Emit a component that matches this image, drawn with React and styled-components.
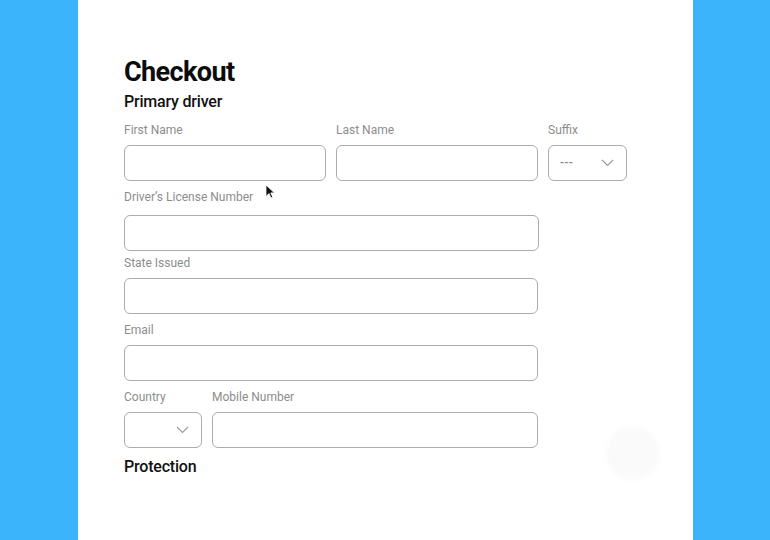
import styled, { createGlobalStyle } from "styled-components";

const GlobalStyle = createGlobalStyle`
  html, body {
    margin: 0;
    padding: 0;
    background: #3bb4fb;
  }
  body {
    font-family: Roboto, "Liberation Sans", sans-serif;
  }
`;

const Page = styled.div`
  display: flex;
  width: 770px;
  height: 540px;
  padding-left: 78px;
  box-sizing: border-box;
  overflow: hidden;
  background: #3bb4fb;
`;

const Panel = styled.main`
  position: relative;
  width: 615px;
  background: #ffffff;
  padding: 56px 0 0 46px;
  box-sizing: border-box;
`;

const Title = styled.h1`
  margin: 0 0 4px;
  font-size: 27px;
  line-height: 32px;
  font-weight: 700;
  letter-spacing: -0.6px;
  color: #0c0c0c;
`;

const Section = styled.h2`
  margin: ${(p) => p.$mt || 0}px 0 11px;
  font-size: 16px;
  line-height: 20px;
  font-weight: 500;
  letter-spacing: -0.2px;
  color: #111;
`;

const Form = styled.div`
  display: flex;
  flex-direction: column;
`;

const Row = styled.div`
  display: flex;
  gap: 10px;
  margin-top: ${(p) => p.$mt || 0}px;
`;

const Field = styled.label`
  display: flex;
  flex-direction: column;
  width: ${(p) => p.$w}px;
  margin-top: ${(p) => p.$mt || 0}px;
`;

const Label = styled.span`
  font-size: 12px;
  line-height: 14px;
  color: #8d8d8d;
  margin-bottom: ${(p) => p.$gap || 8}px;
  white-space: nowrap;
`;

const Input = styled.div`
  height: 36px;
  box-sizing: border-box;
  border: 1.5px solid #acacac;
  border-radius: 6px;
  background: #fff;
`;

const Select = styled(Input)`
  display: flex;
  align-items: center;
  justify-content: space-between;
  padding: 0 12px 0 11px;
`;

const Placeholder = styled.span`
  font-size: 12px;
  font-weight: 500;
  color: #8a8a8a;
  letter-spacing: 0.3px;
`;

const Fab = styled.div`
  position: absolute;
  left: 528px;
  top: 426px;
  width: 54px;
  height: 54px;
  border-radius: 50%;
  background: #fafafa;
  filter: blur(2px);
`;

const Cursor = styled.svg`
  position: absolute;
  left: 187px;
  top: 184px;
`;

const Chevron = () => (
  <svg width="13" height="8" viewBox="0 0 13 8" fill="none">
    <path d="M1 1l5.5 5.5L12 1" stroke="#9a9a9a" strokeWidth="1.1" />
  </svg>
);

export default function App() {
  return (
    <>
      <GlobalStyle />
      <Page>
        <Panel>
          <Title>Checkout</Title>
          <Section>Primary driver</Section>
          <Form>
            <Row>
              <Field $w={202}>
                <Label>First Name</Label>
                <Input />
              </Field>
              <Field $w={202}>
                <Label>Last Name</Label>
                <Input />
              </Field>
              <Field $w={79}>
                <Label>Suffix</Label>
                <Select>
                  <Placeholder>---</Placeholder>
                  <Chevron />
                </Select>
              </Field>
            </Row>
            <Field $w={415} $mt={9}>
              <Label $gap={11}>Driver’s License Number</Label>
              <Input />
            </Field>
            <Field $w={414} $mt={5}>
              <Label>State Issued</Label>
              <Input />
            </Field>
            <Field $w={414} $mt={9}>
              <Label>Email</Label>
              <Input />
            </Field>
            <Row $mt={9}>
              <Field $w={78}>
                <Label>Country</Label>
                <Select>
                  <span />
                  <Chevron />
                </Select>
              </Field>
              <Field $w={326}>
                <Label>Mobile Number</Label>
                <Input />
              </Field>
            </Row>
          </Form>
          <Section $mt={9}>Protection</Section>
          <Fab />
          <Cursor width="10" height="15" viewBox="0 0 10 15">
            <path d="M1 1v11.5l3-3 2 4.5 1.8-.8-2-4.3H9.5z" fill="#111" stroke="#fff" strokeWidth="0.8" />
          </Cursor>
        </Panel>
      </Page>
    </>
  );
}
